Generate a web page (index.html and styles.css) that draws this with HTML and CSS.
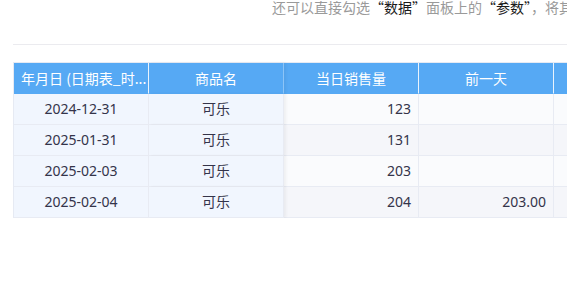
FILE: index.html
```html
<!DOCTYPE html>
<html lang="zh-CN">
<head>
<meta charset="utf-8">
<link rel="stylesheet" href="styles.css">
</head>
<body>
<div class="page">
  <p class="tip">还可以直接勾选<b>“数据”</b>面板上的<b>“参数”</b>，将其拖入</p>
  <div class="divider"></div>
  <div class="table">
    <div class="row head">
      <div class="cell c frozen">年月日 (日期表_时...</div>
      <div class="cell c frozen last-frozen">商品名</div>
      <div class="cell c">当日销售量</div>
      <div class="cell c">前一天</div>
      <div class="cell c">前一天增长</div>
    </div>
    <div class="row odd">
      <div class="cell c frozen">2024-12-31</div>
      <div class="cell c frozen last-frozen">可乐</div>
      <div class="cell r">123</div>
      <div class="cell r"></div>
      <div class="cell r"></div>
    </div>
    <div class="row even">
      <div class="cell c frozen">2025-01-31</div>
      <div class="cell c frozen last-frozen">可乐</div>
      <div class="cell r">131</div>
      <div class="cell r"></div>
      <div class="cell r"></div>
    </div>
    <div class="row odd">
      <div class="cell c frozen">2025-02-03</div>
      <div class="cell c frozen last-frozen">可乐</div>
      <div class="cell r">203</div>
      <div class="cell r"></div>
      <div class="cell r"></div>
    </div>
    <div class="row even">
      <div class="cell c frozen">2025-02-04</div>
      <div class="cell c frozen last-frozen">可乐</div>
      <div class="cell r">204</div>
      <div class="cell r">203.00</div>
      <div class="cell r"></div>
    </div>
  </div>
</div>
</body>
</html>
```
FILE: styles.css
```css
html, body {
  margin: 0;
  padding: 0;
  background: #ffffff;
  overflow: hidden;
}
body {
  width: 567px;
  height: 285px;
  font-family: "Noto Sans", "Noto Sans CJK SC", sans-serif;
  font-size: 14px;
  color: #34344a;
}
.page {
  width: 567px;
  overflow: hidden;
}
.tip {
  margin: 0;
  padding-left: 272px;
  height: 44px;
  line-height: 14px;
  font-family: "Noto Sans CJK SC", sans-serif;
  font-size: 14px;
  color: #9a9a9a;
  white-space: nowrap;
  overflow: hidden;
  box-sizing: border-box;
}
.tip b {
  font-weight: normal;
  color: #1a1a1a;
}
.divider {
  margin-left: 13px;
  height: 1px;
  background: #ebebef;
}
.table {
  margin-top: 17px;
  margin-left: 13px;
  width: max-content;
  border-top: 1px solid #e6eaf3;
  border-left: 1px solid #e6eaf3;
}
.row {
  display: flex;
}
.cell {
  width: 135px;
  height: 31px;
  box-sizing: border-box;
  border-right: 1px solid #e8ebf3;
  border-bottom: 1px solid #e8ebf3;
  line-height: 30px;
  padding: 0 7px;
  white-space: nowrap;
  overflow: hidden;
  flex: none;
}
.cell.c { text-align: center; }
.cell.r { text-align: right; }
.head .cell {
  font-family: "Noto Sans CJK SC", sans-serif;
  background: #56a9f4;
  color: #ffffff;
  border-right-color: #e9f3fd;
  border-bottom-color: #56a9f4;
}
.head .cell.last-frozen {
  border-right-color: #8cc4f7;
}
.odd .cell { background: #fafbfd; }
.even .cell { background: #f5f6fa; }
.row .cell.frozen { background: #f1f6fe; }
.head .cell.frozen { background: #56a9f4; }
.cell.last-frozen {
  position: relative;
  z-index: 1;
  box-shadow: 2px 0 3px rgba(0, 0, 0, 0.05);
}
```
